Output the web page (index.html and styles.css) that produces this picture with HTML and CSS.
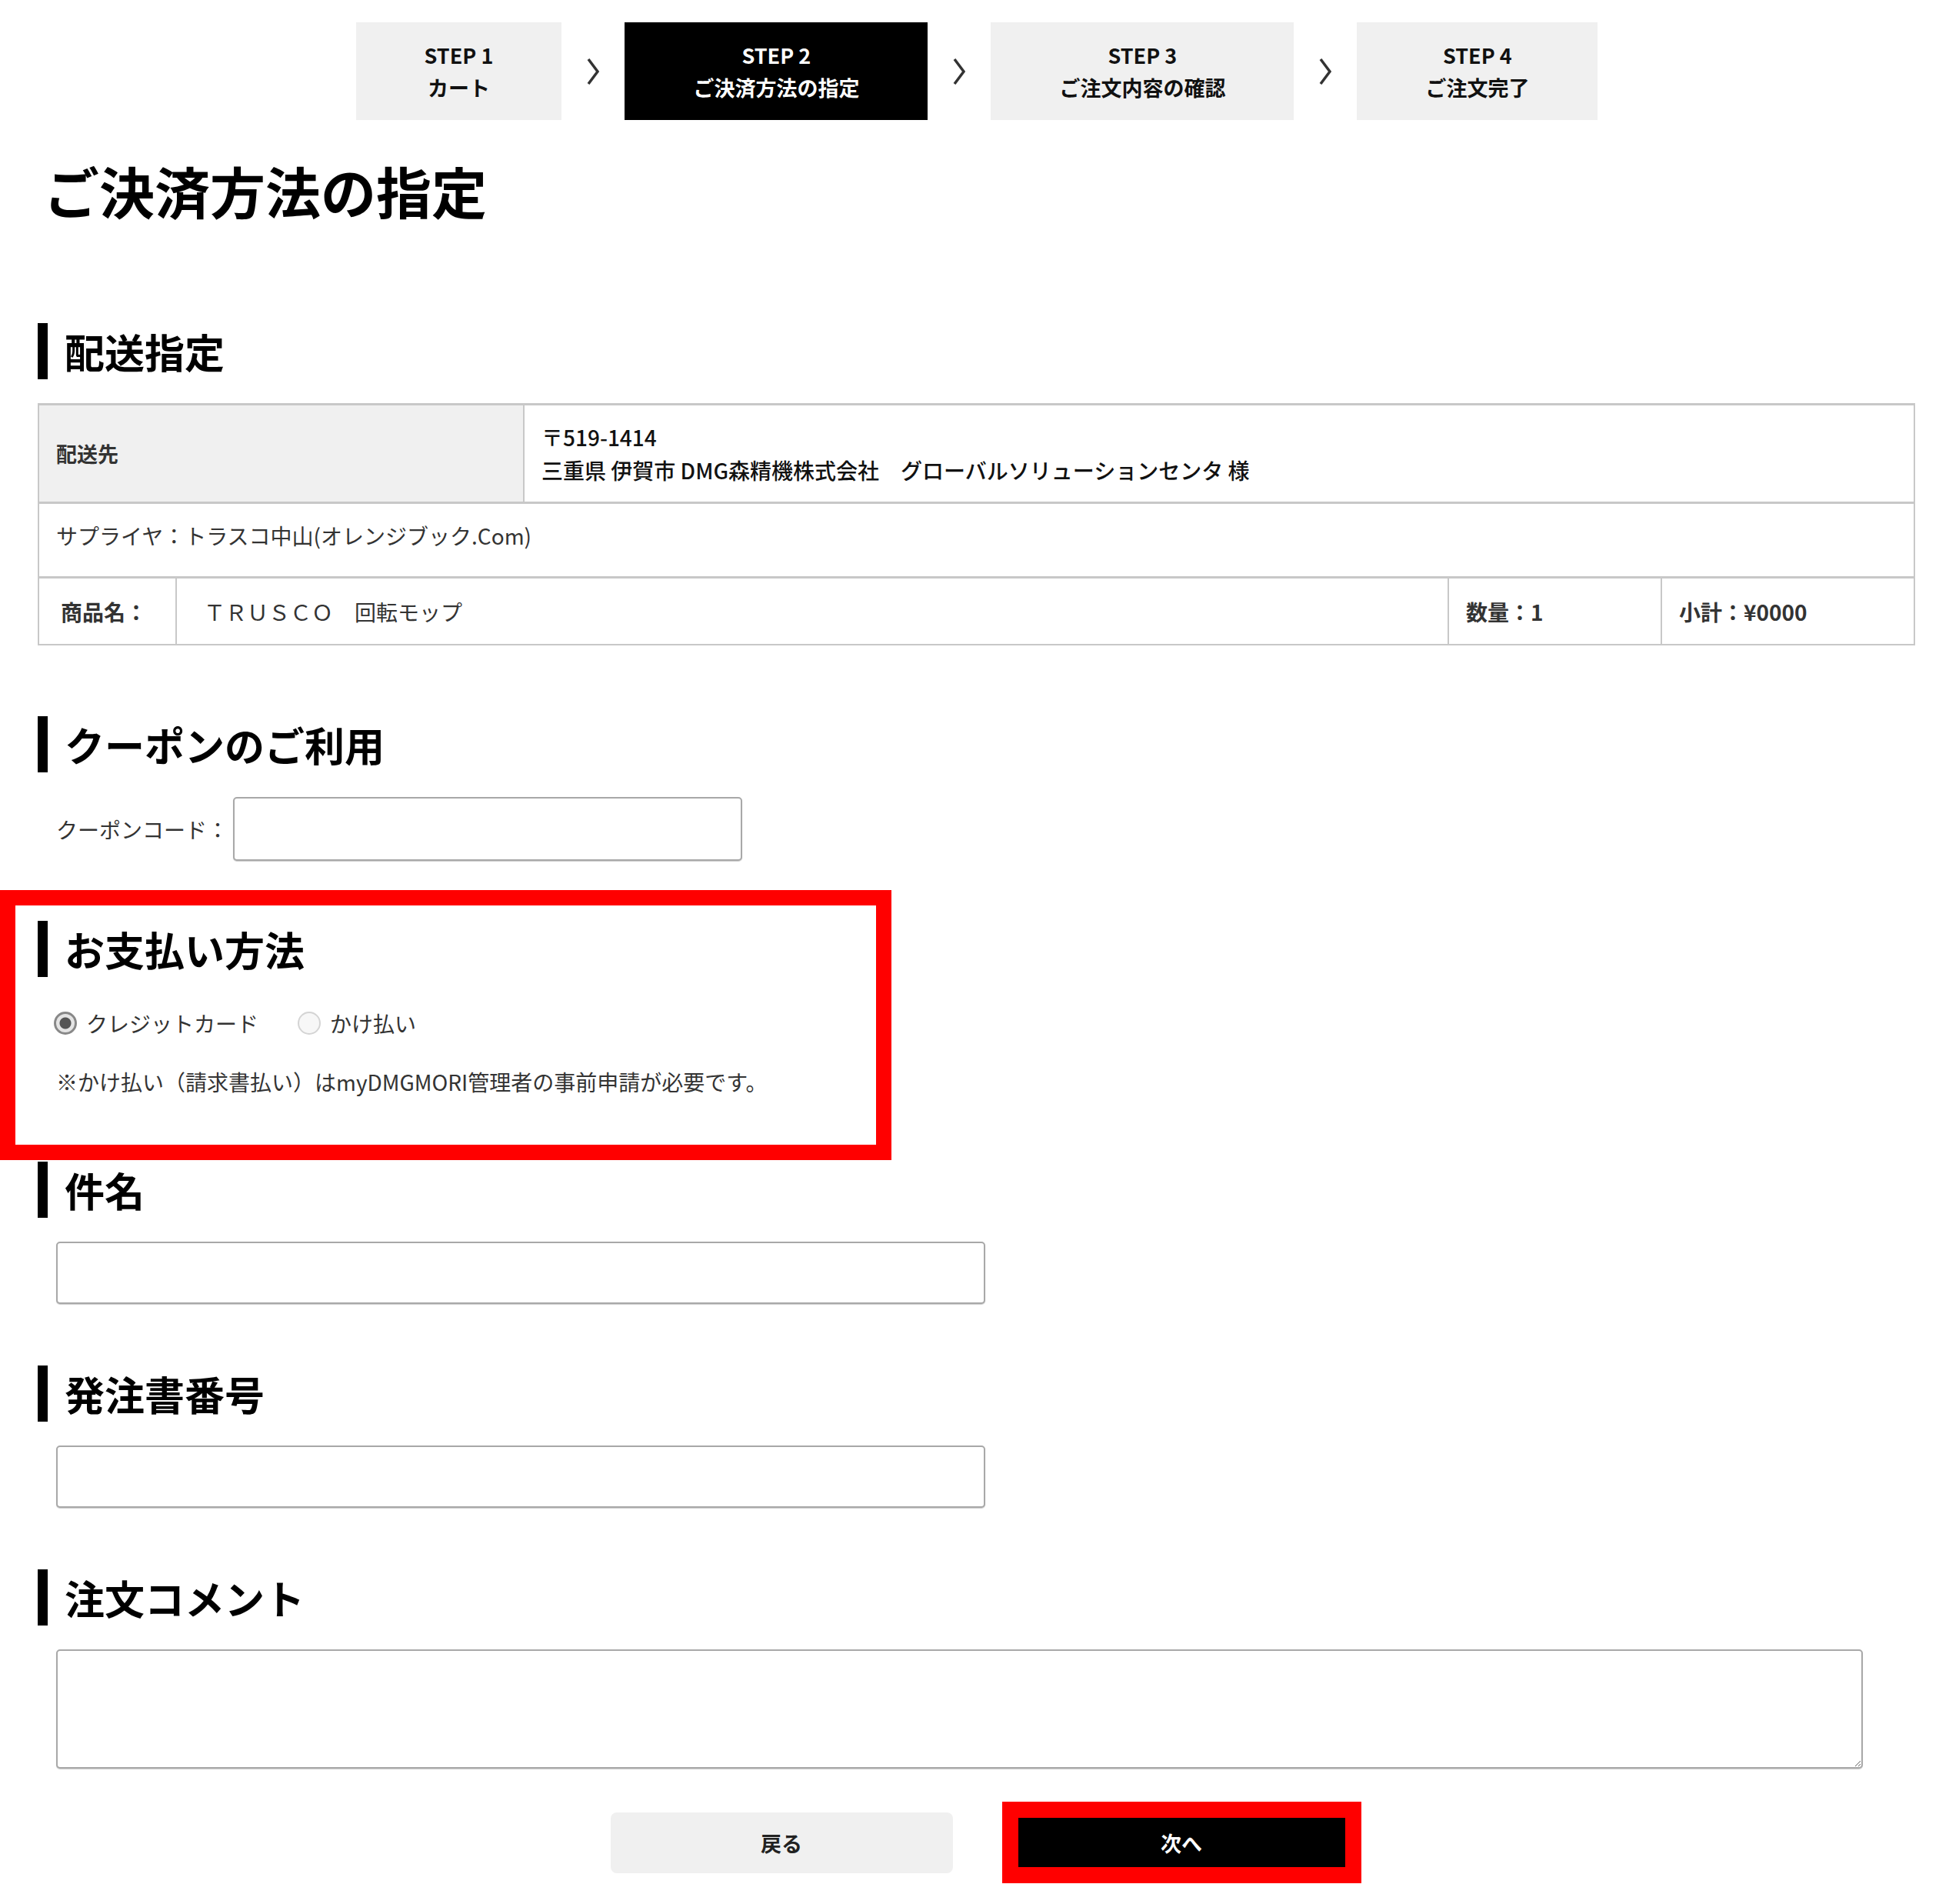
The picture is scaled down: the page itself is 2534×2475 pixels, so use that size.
FILE: index.html
```html
<!DOCTYPE html>
<html lang="ja">
<head>
    <meta charset="UTF-8">
    <title>ご決済方法の指定</title>
    <link rel="stylesheet" href="styles.css">
</head>
<body>
    <div class="steps">
        <div class="step">STEP 1<br>カート</div>
        <svg class="step-arrow" width="16" height="34" viewBox="0 0 16 34"><polyline points="2,1 14,17 2,33" fill="none" stroke="#333" stroke-width="3.5"/></svg>
        <div class="step active">STEP 2<br>ご決済方法の指定</div>
        <svg class="step-arrow" width="16" height="34" viewBox="0 0 16 34"><polyline points="2,1 14,17 2,33" fill="none" stroke="#333" stroke-width="3.5"/></svg>
        <div class="step">STEP 3<br>ご注文内容の確認</div>
        <svg class="step-arrow" width="16" height="34" viewBox="0 0 16 34"><polyline points="2,1 14,17 2,33" fill="none" stroke="#333" stroke-width="3.5"/></svg>
        <div class="step">STEP 4<br>ご注文完了</div>
    </div>

    <div class="container">
        <h1 class="page-title">ご決済方法の指定</h1>

        <!-- 配送指定 -->
        <h2 class="sec-title first">配送指定</h2>
        <div class="ship">
            <div class="ship-row addr-row">
                <div class="cell addr-head">配送先</div>
                <div class="cell addr">〒519-1414<br>三重県 伊賀市 DMG森精機株式会社　グローバルソリューションセンタ 様</div>
            </div>
            <div class="ship-row supplier-row">
                <div class="cell">サプライヤ：トラスコ中山(オレンジブック.Com)</div>
            </div>
            <div class="ship-row item-row">
                <div class="cell item-head">商品名：</div>
                <div class="cell item-name">ＴＲＵＳＣＯ　回転モップ</div>
                <div class="cell item-qty">数量：1</div>
                <div class="cell item-sum">小計：¥0000</div>
            </div>
        </div>

        <!-- クーポン -->
        <h2 class="sec-title coupon-title">クーポンのご利用</h2>
        <div class="coupon">
            <label class="coupon-label" for="coupon">クーポンコード：</label>
            <input type="text" id="coupon" class="text-input coupon-input">
        </div>

        <!-- お支払い方法 -->
        <div class="pay">
            <h2 class="sec-title">お支払い方法</h2>
            <div class="pay-options">
                <input type="radio" name="pay" id="pay-card" checked>
                <label class="pay-label" for="pay-card">クレジットカード</label>
                <input type="radio" name="pay" id="pay-invoice">
                <label class="pay-label" for="pay-invoice">かけ払い</label>
            </div>
            <p class="pay-note">※かけ払い（請求書払い）はmyDMGMORI管理者の事前申請が必要です。</p>
        </div>

        <h2 class="sec-title after-pay">件名</h2>
        <input type="text" class="text-input wide-input">

        <h2 class="sec-title">発注書番号</h2>
        <input type="text" class="text-input wide-input">

        <h2 class="sec-title">注文コメント</h2>
        <textarea class="comment"></textarea>

        <div class="actions">
            <a href="javascript:;" class="btn-back">戻る</a>
            <div class="next-frame">
                <a href="javascript:;" class="btn-next">次へ</a>
            </div>
        </div>
    </div>
</body>
</html>
```

FILE: styles.css
```css
* {
    margin: 0;
    padding: 0;
    box-sizing: border-box;
}
body {
    font-family: "Noto Sans CJK JP", "Noto Sans", sans-serif;
    font-size: 28px;
    color: #222;
    background: #fff;
}
a {
    text-decoration: none;
}

/* steps */
.steps {
    display: flex;
    justify-content: center;
    align-items: center;
    padding-top: 29px;
    padding-left: 6px;
    gap: 33px;
}
.step {
    height: 127px;
    padding: 0 89px;
    display: flex;
    align-items: center;
    justify-content: center;
    text-align: center;
    background: #f0f0f0;
    font-size: 27px;
    font-weight: 700;
    line-height: 42px;
    color: #111;
    white-space: nowrap;
}
.step.active {
    background: #000;
    color: #fff;
}

.container {
    padding: 0 44px 0 49px;
}
.page-title {
    margin: 48px 0 0 8px;
    font-size: 72px;
    font-weight: 700;
    line-height: 86px;
    color: #000;
}
.sec-title {
    margin-top: 80px;
    border-left: 13px solid #000;
    padding-left: 22px;
    font-size: 52px;
    font-weight: 700;
    line-height: 73px;
    color: #000;
}
.sec-title.first {
    margin-top: 130px;
}
.sec-title.coupon-title {
    margin-top: 92px;
}

/* ship table */
.ship {
    margin-top: 31px;
    border: 2px solid #c8c8c8;
    border-top-width: 3px;
    color: #333;
}
.ship-row {
    display: flex;
    border-bottom: 3px solid #c8c8c8;
}
.ship-row:last-child {
    border-bottom: none;
}
.cell {
    padding: 0 22px;
    display: flex;
    align-items: center;
}
.addr-row {
    height: 128px;
}
.addr-head {
    width: 631px;
    background: #f0f0f0;
    border-right: 2px solid #c8c8c8;
    font-size: 27px;
    font-weight: 700;
}
.addr {
    line-height: 43px;
    font-weight: 500;
    color: #111;
}
.supplier-row {
    height: 97px;
}
.supplier-row .cell {
    align-items: flex-start;
    padding-top: 20px;
    line-height: 43px;
}
.item-row {
    height: 85px;
}
.item-head {
    width: 179px;
    padding-left: 28px;
    font-weight: 700;
    border-right: 2px solid #c8c8c8;
}
.item-name {
    flex: 1;
    padding-left: 35px;
}
.item-qty {
    width: 277px;
    border-left: 2px solid #c8c8c8;
    font-weight: 700;
}
.item-sum {
    width: 329px;
    border-left: 2px solid #c8c8c8;
    font-weight: 700;
}

/* inputs */
.text-input,
.comment {
    display: block;
    border: 2px solid #a8a8a8;
    border-radius: 5px;
    box-shadow: 0 1px 1px #ccc;
    background: #fff;
    font-family: inherit;
    font-size: 28px;
}
.coupon {
    margin-top: 32px;
    padding-left: 24px;
    display: flex;
    align-items: center;
}
.coupon-label {
    color: #333;
    margin-right: 6px;
}
.coupon-input {
    width: 662px;
    height: 83px;
}
.wide-input {
    margin: 31px 0 0 24px;
    width: 1208px;
    height: 81px;
}
.comment {
    margin: 31px 0 0 24px;
    width: 2349px;
    height: 155px;
}

/* payment */
.pay {
    margin: 38px 0 0 -49px;
    width: 1159px;
    border: 20px solid #f00;
    padding: 20px 0 62px 29px;
}
.pay .sec-title {
    margin-top: 0;
}
.pay-options {
    margin-top: 45px;
    padding-left: 21px;
    display: flex;
    align-items: center;
    height: 30px;
}
.pay-options input {
    appearance: none;
    -webkit-appearance: none;
    width: 30px;
    height: 30px;
    border-radius: 50%;
    border: 2px solid #d4d4d4;
    background: #f7f7f7;
    margin-right: 12px;
}
.pay-options input:checked {
    border: 3px solid #888;
    background: radial-gradient(circle, #555 0 7px, #e4e4e4 8px);
}
.pay-label {
    color: #333;
    margin-right: 51px;
}
.pay-note {
    margin-top: 41px;
    padding-left: 24px;
    line-height: 40px;
    color: #333;
}
.sec-title.after-pay {
    margin-top: 2px;
}

/* buttons */
.actions {
    margin-top: 43px;
    padding: 0 0 29px 24px;
    display: flex;
    justify-content: center;
    align-items: center;
    gap: 64px;
}
.btn-back {
    width: 445px;
    height: 79px;
    border-radius: 8px;
    background: #f0f0f0;
    display: flex;
    align-items: center;
    justify-content: center;
    font-size: 27px;
    font-weight: 700;
    color: #222;
}
.next-frame {
    border: 21px solid #f00;
}
.btn-next {
    width: 425px;
    height: 64px;
    background: #000;
    display: flex;
    align-items: center;
    justify-content: center;
    font-size: 27px;
    font-weight: 700;
    color: #fff;
}
```
